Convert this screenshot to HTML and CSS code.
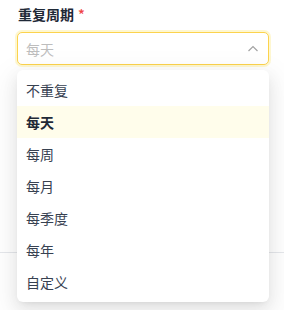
FILE: index.html
```html
<!DOCTYPE html>
<html lang="zh">
<head>
<meta charset="utf-8">
<link rel="stylesheet" href="styles.css">
</head>
<body>
<div class="form">
  <div class="field">
    <label class="label">重复周期<span class="req">*</span></label>
    <div class="select-wrap">
      <div class="select">
        <span class="placeholder">每天</span>
        <svg class="chev" width="12" height="12" viewBox="0 0 12 12"><path d="M1.5 8 L6 3.5 L10.5 8" fill="none" stroke="#a3a3a3" stroke-width="1.2"/></svg>
      </div>
      <ul class="menu">
        <li class="opt">不重复</li>
        <li class="opt active">每天</li>
        <li class="opt">每周</li>
        <li class="opt">每月</li>
        <li class="opt">每季度</li>
        <li class="opt">每年</li>
        <li class="opt">自定义</li>
      </ul>
    </div>
  </div>
  <div class="divider"></div>
</div>
</body>
</html>
```
FILE: styles.css
```css
* { box-sizing: border-box; }
html, body { margin: 0; padding: 0; background: #fff; }
body {
  width: 284px;
  height: 310px;
  overflow: hidden;
  font-family: "Noto Sans CJK SC", "Noto Sans", sans-serif;
}
.form { padding: 4px 15px 0 17px; }
.field { display: flex; flex-direction: column; }
.label {
  font-size: 14px;
  line-height: 20px;
  font-weight: 600;
  color: #1f2937;
  padding-left: 1px;
  margin-bottom: 8px;
}
.req { color: #ef4444; margin-left: 4px; font-weight: 500; }
.select-wrap { position: relative; }
.select {
  height: 33px;
  border: 1px solid #fcd34d;
  border-radius: 5px;
  box-shadow: 0 0 0 2px rgba(253, 224, 71, 0.25);
  display: flex;
  align-items: center;
  justify-content: space-between;
  padding: 0 8px 0 8px;
  background: #fff;
}
.placeholder { font-size: 14px; color: #bdbdbd; line-height: 20px; }
.chev { display: block; margin-right: 1px; }
.menu {
  position: absolute;
  top: 38px;
  left: 0;
  right: 0;
  margin: 0;
  padding: 4px 0;
  list-style: none;
  background: #fff;
  border-radius: 6px;
  box-shadow: 0 6px 16px 0 rgba(0,0,0,0.08), 0 3px 6px -4px rgba(0,0,0,0.12), 0 9px 28px 8px rgba(0,0,0,0.05);
  z-index: 2;
}
.opt {
  height: 32px;
  display: flex;
  align-items: center;
  padding-left: 9px;
  font-size: 14px;
  color: #374151;
}
.opt.active { background: #fffdeb; font-weight: 600; color: #1f2937; }
.divider {
  margin: 187px -15px 0 -17px;
  height: 1px;
  background: #e5e7eb;
}
```
